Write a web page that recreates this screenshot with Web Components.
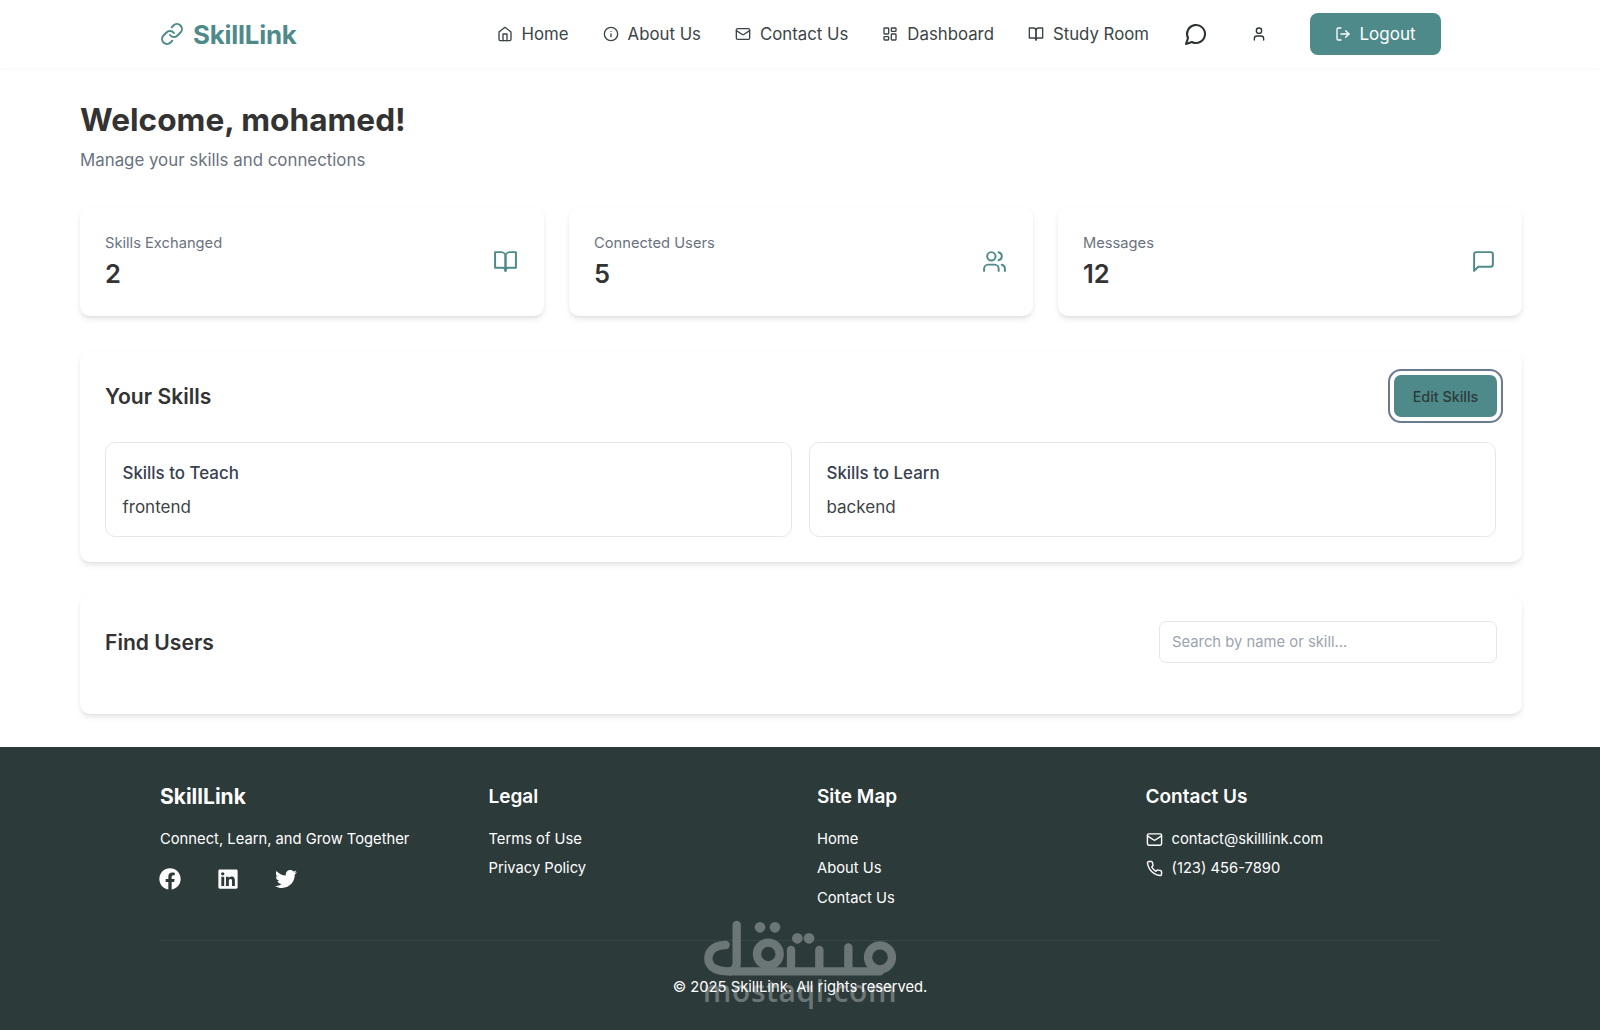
<!DOCTYPE html>
<html lang="en"><head><meta charset="utf-8"><title>SkillLink</title>
<style>
html,body{margin:0;padding:0;background:#fff;}
body{font-family:Inter,"Liberation Sans",sans-serif;color:#333;height:1030px;overflow:hidden;}
</style></head><body>
<sk-app></sk-app>
<script>
const P={
home:'<path d="m3 9 9-7 9 7v11a2 2 0 0 1-2 2H5a2 2 0 0 1-2-2z"/><polyline points="9 22 9 12 15 12 15 22"/>',
info:'<circle cx="12" cy="12" r="10"/><path d="M12 16v-4"/><path d="M12 8h.01"/>',
mail:'<rect x="2" y="4" width="20" height="16" rx="2"/><path d="m22 7-8.97 5.7a1.94 1.94 0 0 1-2.06 0L2 7"/>',
dash:'<rect width="7" height="9" x="3" y="3" rx="1"/><rect width="7" height="5" x="14" y="3" rx="1"/><rect width="7" height="9" x="14" y="12" rx="1"/><rect width="7" height="5" x="3" y="16" rx="1"/>',
book:'<path d="M2 3h6a4 4 0 0 1 4 4v14a3 3 0 0 0-3-3H2z"/><path d="M22 3h-6a4 4 0 0 0-4 4v14a3 3 0 0 1 3-3h7z"/>',
chat:'<path d="M7.9 20A9 9 0 1 0 4 16.1L2 22Z"/>',
user:'<path d="M19 21v-2a4 4 0 0 0-4-4H9a4 4 0 0 0-4 4v2"/><circle cx="12" cy="7" r="4"/>',
logout:'<path d="M9 21H5a2 2 0 0 1-2-2V5a2 2 0 0 1 2-2h4"/><polyline points="16 17 21 12 16 7"/><line x1="21" x2="9" y1="12" y2="12"/>',
link:'<path d="M10 13a5 5 0 0 0 7.54.54l3-3a5 5 0 0 0-7.07-7.07l-1.72 1.71"/><path d="M14 11a5 5 0 0 0-7.54-.54l-3 3a5 5 0 0 0 7.07 7.07l1.71-1.71"/>',
users:'<path d="M16 21v-2a4 4 0 0 0-4-4H6a4 4 0 0 0-4 4v2"/><circle cx="9" cy="7" r="4"/><path d="M22 21v-2a4 4 0 0 0-3-3.87"/><path d="M16 3.13a4 4 0 0 1 0 7.75"/>',
square:'<path d="M21 15a2 2 0 0 1-2 2H7l-4 4V5a2 2 0 0 1 2-2h14a2 2 0 0 1 2 2z"/>',
phone:'<path d="M22 16.92v3a2 2 0 0 1-2.18 2 19.79 19.79 0 0 1-8.63-3.07 19.5 19.5 0 0 1-6-6 19.79 19.79 0 0 1-3.07-8.67A2 2 0 0 1 4.11 2h3a2 2 0 0 1 2 1.72 12.84 12.84 0 0 0 .7 2.81 2 2 0 0 1-.45 2.11L8.09 9.91a16 16 0 0 0 6 6l1.27-1.27a2 2 0 0 1 2.11-.45 12.84 12.84 0 0 0 2.81.7A2 2 0 0 1 22 16.92z"/>'
};
const BRAND={
fb:['0 0 512 512','M504 256C504 119 393 8 256 8S8 119 8 256c0 123.78 90.69 226.38 209.25 245V327.69h-63V256h63v-54.64c0-62.15 37-96.48 93.67-96.48 27.14 0 55.52 4.84 55.52 4.84v61h-31.28c-30.8 0-40.41 19.12-40.41 38.73V256h68.78l-11 71.69h-57.78V501C413.31 482.38 504 379.78 504 256z'],
in:['0 0 448 512','M416 32H31.9C14.3 32 0 46.5 0 64.3v383.4C0 465.5 14.3 480 31.9 480H416c17.6 0 32-14.5 32-32.3V64.3c0-17.8-14.4-32.3-32-32.3zM135.4 416H69V202.2h66.5V416zm-33.2-243c-21.3 0-38.5-17.3-38.5-38.5S80.9 96 102.2 96c21.2 0 38.5 17.3 38.5 38.5 0 21.3-17.2 38.5-38.5 38.5zm282.1 243h-66.4V312c0-24.8-.5-56.7-34.5-56.7-34.6 0-39.9 27-39.9 54.9V416h-66.4V202.2h63.7v29.2h.9c8.9-16.8 30.6-34.5 62.9-34.5 67.2 0 79.7 44.3 79.7 101.9V416z'],
tw:['0 0 512 512','M459.37 151.716c.325 4.548.325 9.097.325 13.645 0 138.72-105.583 298.558-298.558 298.558-59.452 0-114.68-17.219-161.137-47.106 8.447.974 16.568 1.299 25.34 1.299 49.055 0 94.213-16.568 130.274-44.832-46.132-.975-84.792-31.188-98.112-72.772 6.498.974 12.995 1.624 19.818 1.624 9.421 0 18.843-1.3 27.614-3.573-48.081-9.747-84.143-51.98-84.143-102.985v-1.299c13.969 7.797 30.214 12.67 47.431 13.319-28.264-18.843-46.781-51.005-46.781-87.391 0-19.492 5.197-37.36 14.294-52.954 51.655 63.675 129.3 105.258 216.365 109.807-1.624-7.797-2.599-15.918-2.599-24.04 0-57.828 46.782-104.934 104.934-104.934 30.213 0 57.502 12.67 76.67 33.137 23.715-4.548 46.456-13.32 66.599-25.34-7.798 24.366-24.366 44.833-46.456 58.127 21.391-2.273 42.132-8.122 61.3-16.243-14.62 21.281-32.813 40.123-53.505 55.193z']
};
class Base extends HTMLElement{
  constructor(){super();this.attachShadow({mode:'open'});}
  a(n,d=''){const v=this.getAttribute(n);return v===null?d:v;}
}
class SkIcon extends Base{connectedCallback(){
  const s=this.a('size','16'),w=this.a('sw','2');
  const b=BRAND[this.a('name')];
  const svg=b?`<svg width="${s}" height="${s}" viewBox="${b[0]}" fill="currentColor"><path d="${b[1]}"/></svg>`
   :`<svg width="${s}" height="${s}" viewBox="0 0 24 24" fill="none" stroke="currentColor" stroke-width="${w}" stroke-linecap="round" stroke-linejoin="round">${P[this.a('name')]}</svg>`;
  this.shadowRoot.innerHTML=`<style>:host{display:inline-flex;flex:none;align-items:center;justify-content:center}svg{display:block}</style>${svg}`;
}}
class SkNavLink extends Base{connectedCallback(){
  this.shadowRoot.innerHTML=`<style>:host{display:flex;align-items:center;gap:9px;font-size:16.8px;line-height:24px;color:#3b4446;white-space:nowrap}</style><sk-icon name="${this.a('icon')}" size="16"></sk-icon><slot></slot>`;
}}
class SkHeader extends Base{connectedCallback(){
  this.shadowRoot.innerHTML=`<style>
  :host{display:block;height:68px;background:#fff;box-shadow:0 1px 3px rgba(0,0,0,.04)}
  .in{width:1282px;margin:0 auto;height:68px;display:flex;align-items:center;justify-content:space-between;box-sizing:border-box;padding-left:1px}
  .logo{display:flex;align-items:center;gap:9px;color:#4f8a8b;font-size:25.8px;font-weight:700;letter-spacing:-.2px}
  nav{display:flex;align-items:center;gap:34px}
  .ic{color:#2d3436;display:flex}
  .btn{display:flex;align-items:center;justify-content:center;gap:8px;width:131px;height:42px;background:#4f8a8b;color:#fff;border-radius:8px;font-size:17px;font-weight:400}
  </style><div class="in">
  <div class="logo"><sk-icon name="link" size="24"></sk-icon><span>SkillLink</span></div>
  <nav>
   <sk-nav-link icon="home">Home</sk-nav-link>
   <sk-nav-link icon="info">About Us</sk-nav-link>
   <sk-nav-link icon="mail">Contact Us</sk-nav-link>
   <sk-nav-link icon="dash">Dashboard</sk-nav-link>
   <sk-nav-link icon="book">Study Room</sk-nav-link>
   <span class="ic" style="margin-left:1px"><sk-icon name="chat" size="24" sw="2.1"></sk-icon></span>
   <span class="ic" style="margin:0 9px 0 9px"><sk-icon name="user" size="16"></sk-icon></span>
   <div class="btn"><sk-icon name="logout" size="16"></sk-icon><span>Logout</span></div>
  </nav></div>`;
}}
const CARD_SHADOW='0 4px 6px -1px rgba(0,0,0,.1),0 2px 4px -2px rgba(0,0,0,.05),0 0 5px rgba(0,0,0,.025)';
class SkStat extends Base{connectedCallback(){
  this.shadowRoot.innerHTML=`<style>
  :host{display:flex;align-items:center;justify-content:space-between;height:109px;box-sizing:border-box;padding:0 26px 0 25px;background:#fff;border-radius:10px;box-shadow:${CARD_SHADOW}}
  .l{font-size:14.7px;line-height:20px;color:#6b7280;margin-bottom:5px}
  .v{font-size:25.5px;line-height:32px;font-weight:600;color:#333}
  .i{color:#4f8a8b}
  </style><div><div class="l">${this.a('label')}</div><div class="v">${this.a('value')}</div></div><sk-icon class="i" name="${this.a('icon')}" size="25" sw="1.9"></sk-icon>`;
}}
class SkCard extends Base{connectedCallback(){
  this.shadowRoot.innerHTML=`<style>
  :host{display:block;box-sizing:border-box;background:#fff;border-radius:10px;padding:var(--pt,25px) 25px 25px;box-shadow:${CARD_SHADOW}}
  .top{display:flex;align-items:center;justify-content:space-between;min-height:42px}
  h2{margin:var(--h2mt,0) 0 0;font-size:21.1px;line-height:28px;font-weight:600;color:#333}
  </style><div class="top"><h2>${this.a('title')}</h2><slot name="action"></slot></div><slot></slot>`;
}}
class SkSkillBox extends Base{connectedCallback(){
  this.shadowRoot.innerHTML=`<style>
  :host{display:block;box-sizing:border-box;height:95px;border:1px solid #e5e7eb;border-radius:10px;padding:18px 16.5px;background:#fff}
  h3{margin:0 0 10px;font-size:16.9px;line-height:24px;font-weight:500;color:#374151}
  p{margin:0;font-size:17px;line-height:24px;color:#3d4347}
  </style><h3>${this.a('title')}</h3><p><slot></slot></p>`;
}}
class SkFootCol extends Base{connectedCallback(){
  const brand=this.hasAttribute('brand');
  this.shadowRoot.innerHTML=`<style>
  :host{display:block;color:#fff}
  h3{margin:0 0 14px;font-size:${brand?'21px':'19px'};line-height:28px;font-weight:${brand?700:600}}
  .b{display:flex;flex-direction:column;font-size:14.75px;line-height:29.5px}
  </style><h3>${this.a('title')}</h3><div class="b"><slot></slot></div>`;
}}
class SkFootRow extends Base{connectedCallback(){
  const ic=this.a('icon');
  this.shadowRoot.innerHTML=`<style>:host{display:flex;align-items:center;gap:9px;height:29.3px;white-space:nowrap}</style>${ic?`<sk-icon name="${ic}" size="17"></sk-icon>`:''}<slot></slot>`;
}}
class SkWatermark extends Base{connectedCallback(){
  this.shadowRoot.innerHTML=`<style>
  :host{position:absolute;left:700px;top:173px;width:200px;height:92px;color:#6c7676;pointer-events:none}
  svg{display:block}
  .t{position:absolute;left:0;right:0;top:53px;text-align:center;font:600 30px/36px "Open Sans",sans-serif;letter-spacing:.6px}
  </style>
  <svg width="200" height="60" viewBox="120 60 600 180" fill="none" stroke="currentColor" stroke-width="25" stroke-linecap="round">
   <path d="M197 135C155 135 145 160 145 175C145 205 175 214 205 214H660"/>
   <path d="M230 75V190Q230 210 210 214"/>
   <circle cx="325" cy="162" r="34"/>
   <path d="M393 150V200M478 150V200M565 142V200"/>
   <circle cx="660" cy="172" r="36"/>
   <g fill="currentColor" stroke="none"><circle cx="300" cy="82" r="16"/><circle cx="345" cy="82" r="16"/><circle cx="412" cy="115" r="16"/><circle cx="447" cy="115" r="16"/></g>
  </svg><div class="t">mostaql.com</div>`;
}}
class SkFooter extends Base{connectedCallback(){
  this.shadowRoot.innerHTML=`<style>
  :host{display:block;position:relative;background:#2d3a3a;height:283px;color:#fff}
  .in{width:1280px;margin:0 auto;padding-top:36px;box-sizing:border-box}
  .grid{display:grid;grid-template-columns:repeat(4,304.5px);column-gap:24px;height:157px}
  .soc{display:flex;margin:13px 0 0 -1px}
  .soc sk-icon{width:58px;justify-content:flex-start;height:24px}
  hr{border:0;border-top:1px solid rgba(255,255,255,.06);margin:0}
  .c{position:relative;text-align:center;font-size:14.75px;line-height:24px;margin-top:34px}
  </style><sk-watermark></sk-watermark><div class="in"><div class="grid">
   <sk-foot-col brand title="SkillLink"><sk-foot-row>Connect, Learn, and Grow Together</sk-foot-row>
     <div class="soc"><sk-icon name="fb" size="22"></sk-icon><sk-icon name="in" size="22"></sk-icon><sk-icon name="tw" size="22"></sk-icon></div></sk-foot-col>
   <sk-foot-col title="Legal"><sk-foot-row>Terms of Use</sk-foot-row><sk-foot-row>Privacy Policy</sk-foot-row></sk-foot-col>
   <sk-foot-col title="Site Map"><sk-foot-row>Home</sk-foot-row><sk-foot-row>About Us</sk-foot-row><sk-foot-row>Contact Us</sk-foot-row></sk-foot-col>
   <sk-foot-col title="Contact Us"><sk-foot-row icon="mail">contact@skilllink.com</sk-foot-row><sk-foot-row icon="phone">(123) 456-7890</sk-foot-row></sk-foot-col>
  </div><hr><div class="c">© 2025 SkillLink. All rights reserved.</div></div>`;
}}
class SkApp extends Base{connectedCallback(){
  this.shadowRoot.innerHTML=`<style>
  :host{display:block}
  main{width:1442px;margin:0 auto 0 80px;padding:32px 0 33px;box-sizing:content-box}
  h1{margin:0;font-size:31.6px;line-height:40px;font-weight:700;color:#333}
  .sub{margin:6px 0 33px;font-size:16.85px;line-height:28px;color:#6b7280}
  .stats{display:grid;grid-template-columns:repeat(3,464px);column-gap:25px;margin-bottom:35px}
  #skills{height:211px;margin-bottom:34px;--pt:24px;--h2mt:2px}
  #find{height:118px;--h2mt:2px}
  .two{display:grid;grid-template-columns:687px 687px;column-gap:17px;margin-top:25px}
  .edit{position:relative;display:flex;align-items:center;justify-content:center;width:103px;height:42px;background:#4f8a8b;color:#2d3a3a;border-radius:7px;font-size:14.3px;font-weight:500;outline:2px solid #6b7a90;outline-offset:4px}
  .search{width:338px;height:42px;box-sizing:border-box;border:1px solid #e5e7eb;border-radius:7px;padding:0 12px;font:14.8px Inter,sans-serif;color:#333;background:#fff;margin:0}
  .search::placeholder{color:#9ca3af}
  </style>
  <sk-header></sk-header>
  <main>
   <h1>Welcome, mohamed!</h1>
   <div class="sub">Manage your skills and connections</div>
   <div class="stats">
    <sk-stat label="Skills Exchanged" value="2" icon="book"></sk-stat>
    <sk-stat label="Connected Users" value="5" icon="users"></sk-stat>
    <sk-stat label="Messages" value="12" icon="square"></sk-stat>
   </div>
   <sk-card id="skills" title="Your Skills"><div slot="action" class="edit">Edit Skills</div>
    <div class="two"><sk-skill-box title="Skills to Teach">frontend</sk-skill-box><sk-skill-box title="Skills to Learn">backend</sk-skill-box></div>
   </sk-card>
   <sk-card id="find" title="Find Users"><input slot="action" class="search" placeholder="Search by name or skill..."></sk-card>
  </main>
  <sk-footer></sk-footer>`;
}}
customElements.define('sk-icon',SkIcon);
customElements.define('sk-nav-link',SkNavLink);
customElements.define('sk-header',SkHeader);
customElements.define('sk-stat',SkStat);
customElements.define('sk-card',SkCard);
customElements.define('sk-skill-box',SkSkillBox);
customElements.define('sk-foot-col',SkFootCol);
customElements.define('sk-foot-row',SkFootRow);
customElements.define('sk-watermark',SkWatermark);
customElements.define('sk-footer',SkFooter);
customElements.define('sk-app',SkApp);
</script>
</body></html>
